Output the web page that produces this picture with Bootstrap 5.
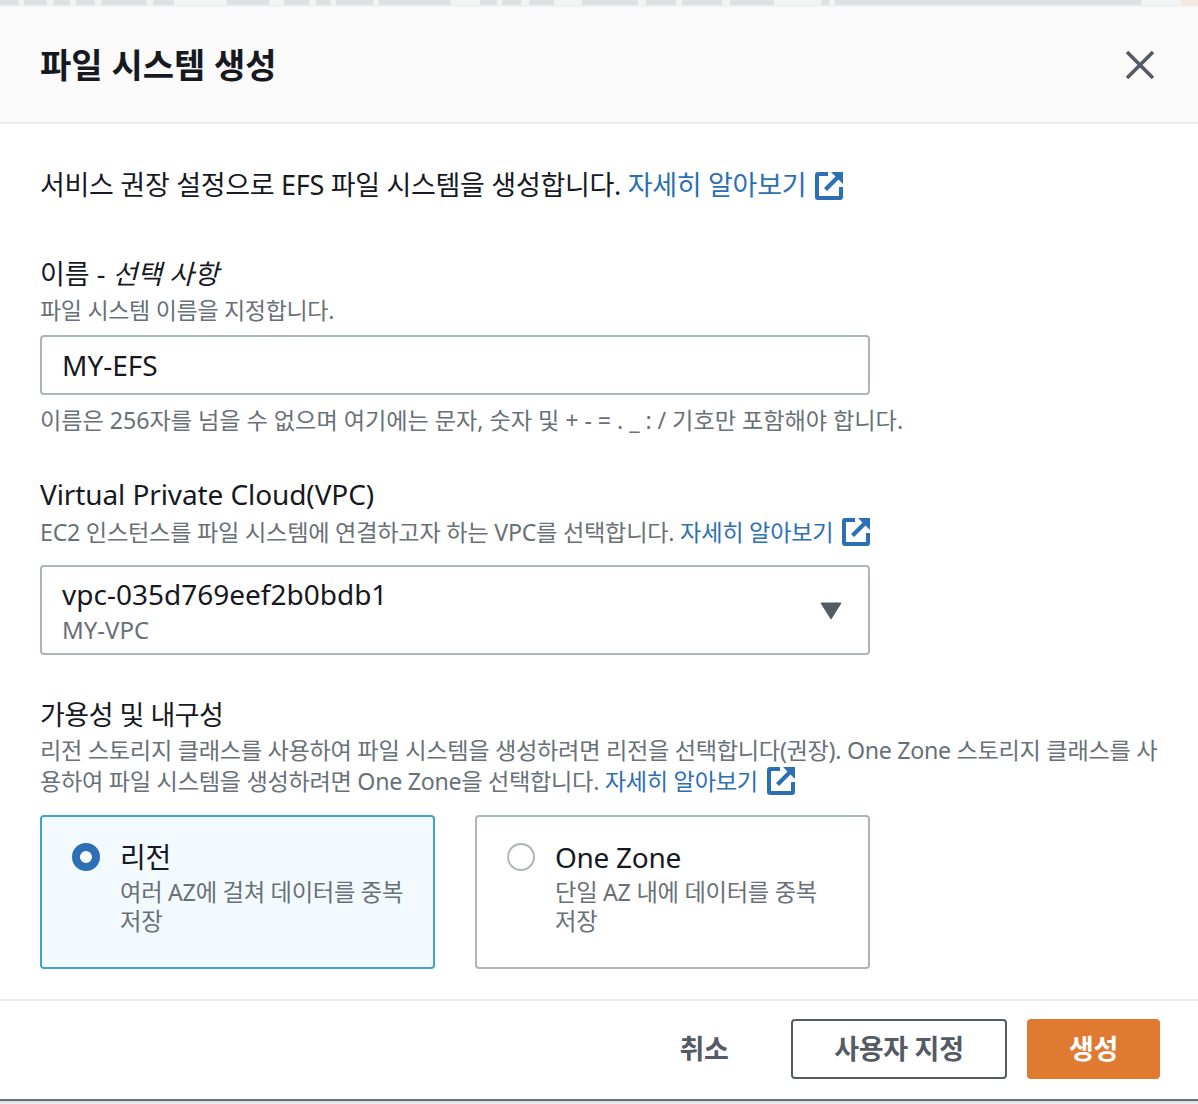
<!DOCTYPE html>
<html lang="ko">
<head>
<meta charset="utf-8">
<title>파일 시스템 생성</title>
<link href="https://cdn.jsdelivr.net/npm/bootstrap@5.3.0/dist/css/bootstrap.min.css" rel="stylesheet">
<style>
html,body{height:1104px;overflow:hidden}
body{font-family:"Noto Sans","Noto Sans CJK KR",sans-serif;background:#e9ebed;color:#16191f;font-size:27px;line-height:36px;letter-spacing:-.3px}
.backdrop{height:7px;border-bottom:2px solid #eef1f1;background:linear-gradient(90deg,#dfe0e2 19px,#f2f3f3 19px 24px,#dfe0e2 24px 47px,#f2f3f3 47px 53px,#dfe0e2 53px 70px,#f2f3f3 70px 76px,#dfe0e2 76px 95px,#f2f3f3 95px 101px,#dfe0e2 101px 147px,#f2f3f3 147px 153px,#dfe0e2 153px 174px,#f2f3f3 174px 227px,#dfe0e2 227px 269px,#f2f3f3 269px 284px,#dfe0e2 284px 309px,#f2f3f3 309px 316px,#dfe0e2 316px 331px,#f2f3f3 331px 336px,#dfe0e2 336px 373px,#f2f3f3 373px 379px,#dfe0e2 379px 451px,#f2f3f3 451px 480px,#dfe0e2 480px 497px,#f2f3f3 497px 502px,#dfe0e2 502px 521px,#f2f3f3 521px 529px,#dfe0e2 529px 554px,#f2f3f3 554px 582px,#dfe0e2 582px 638px,#f2f3f3 638px 646px,#dfe0e2 646px 676px,#f2f3f3 676px 682px,#dfe0e2 682px 722px,#f2f3f3 722px 730px,#dfe0e2 730px 774px,#f2f3f3 774px 821px,#dfe0e2 821px 829px,#f2f3f3 829px 835px,#dfe0e2 835px 1141px,#f2f3f3 1141px 1181px,#f5e9df 1181px)}
.dlg{height:1092px;background:#fff;box-shadow:0 2px 1px #687078;display:flex;flex-direction:column}
.dlg-head{height:117px;background:#fafafa;border-bottom:2px solid #eaeded;padding:0 40px}
.dlg-title{font-size:34px;font-weight:700;margin:0;line-height:1;color:#16191f;letter-spacing:0}
.dlg-body{flex:1;padding:42px 40px 0}
.dlg-foot{height:100px;border-top:2px solid #eaeded;padding:18px 38px 0 0}
.lnk{color:#2c6fb5;text-decoration:none}
.ext{width:28px;height:28px;vertical-align:-5px;margin-left:9px}
.fld-label{font-size:27px;line-height:32px;color:#16191f;letter-spacing:0}
.fld-label em{font-style:italic}
.fld-latin{font-size:28px;letter-spacing:-.1px}
.fld-tight{letter-spacing:-.5px}
.fld-desc{font-size:23.2px;line-height:31px;color:#687078;margin-top:5px}
.fld-name{font-size:23px}
.fld-hint{letter-spacing:-.05px;margin-top:10px}
.fld-vpc{letter-spacing:-.25px}
.inp{width:830px;height:60px;border:2px solid #aab7b8;border-radius:4px;padding:0 20px;font-size:28px;color:#16191f;display:flex;align-items:center;background:#fff;letter-spacing:0}
.sel{height:90px;position:relative;display:block;padding:7px 20px}
.sel-main{font-size:28px;line-height:40px}
.sel-sub{font-size:24px;line-height:32px;color:#687078}
.caret{position:absolute;right:26px;top:35px;width:22px;height:18px}
.opts{width:830px;gap:40px}
.opt{flex:1 1 0;height:154px;border:2px solid #aab7b8;border-radius:4px;padding:22px 28px 22px 30px;gap:20px}
.opt.sel-on{border-color:#44a1ce;background:#f3fafe}
.rad{flex:none;width:28px;height:28px;margin-top:4px}
.opt-title{font-size:28px;line-height:36px;color:#16191f}
.opt-desc{font-size:23.3px;line-height:29px;color:#687078;margin-top:3px}
.xbtn{width:44px;height:44px;padding:8px;border:0;background:transparent;margin-right:-4px}
.xbtn svg{display:block}
.act{height:60px;border-radius:4px;font-size:27px;font-weight:700;font-family:inherit;display:flex;align-items:center;justify-content:center;letter-spacing:-.3px}
.act-plain{width:110px;border:0;background:transparent;color:#545b64;margin-right:32px}
.act-line{width:216px;border:2px solid #545b64;background:#fff;color:#545b64;margin-right:20px}
.act-main{width:133px;border:0;background:#df7a30;color:#fff}
</style>
</head>
<body>
<div class="backdrop"></div>
<div class="dlg">
  <div class="dlg-head d-flex align-items-center justify-content-between">
    <h1 class="dlg-title">파일 시스템 생성</h1>
    <button class="xbtn" type="button" aria-label="닫기">
      <svg viewBox="0 0 28 28" width="28" height="28"><path d="M1 1L27 27M27 1L1 27" stroke="#545b64" stroke-width="3.6" fill="none"/></svg>
    </button>
  </div>
  <div class="dlg-body">
    <p class="m-0" style="line-height:38px">서비스 권장 설정으로 EFS 파일 시스템을 생성합니다. <a class="lnk" href="#">자세히 알아보기<svg class="ext" viewBox="0 0 28 28"><path d="M13 2H3a1 1 0 0 0-1 1V25a1 1 0 0 0 1 1H25a1 1 0 0 0 1-1V15" fill="none" stroke="#2c6fb5" stroke-width="4"/><path d="M16 0H28V12L23.500 7.500L12 19L9 16L20.500 4.500Z" fill="#2c6fb5"/></svg></a></p>

    <div class="fld-label" style="margin-top:54px">이름 - <em>선택 사항</em></div>
    <div class="fld-desc fld-name">파일 시스템 이름을 지정합니다.</div>
    <div class="inp" style="margin-top:9px">MY-EFS</div>
    <div class="fld-desc fld-hint">이름은 256자를 넘을 수 없으며 여기에는 문자, 숫자 및 + - = . _ : / 기호만 포함해야 합니다.</div>

    <div class="fld-label fld-latin" style="margin-top:42px">Virtual Private Cloud(VPC)</div>
    <div class="fld-desc fld-vpc" style="margin-top:7px">EC2 인스턴스를 파일 시스템에 연결하고자 하는 VPC를 선택합니다. <a class="lnk" href="#">자세히 알아보기<svg class="ext" viewBox="0 0 28 28"><path d="M13 2H3a1 1 0 0 0-1 1V25a1 1 0 0 0 1 1H25a1 1 0 0 0 1-1V15" fill="none" stroke="#2c6fb5" stroke-width="4"/><path d="M16 0H28V12L23.500 7.500L12 19L9 16L20.500 4.500Z" fill="#2c6fb5"/></svg></a></div>
    <div class="inp sel" style="margin-top:17px">
      <div class="sel-main">vpc-035d769eef2b0bdb1</div>
      <div class="sel-sub">MY-VPC</div>
      <svg class="caret" viewBox="0 0 22 18"><path d="M1 1H21L11 17Z" fill="#545b64" stroke="#545b64" stroke-linejoin="round"/></svg>
    </div>

    <div class="fld-label fld-tight" style="margin-top:44px">가용성 및 내구성</div>
    <div class="fld-desc" style="margin-top:4px">리전 스토리지 클래스를 사용하여 파일 시스템을 생성하려면 리전을 선택합니다(권장). One Zone 스토리지 클래스를 사용하여 파일 시스템을 생성하려면 One Zone을 선택합니다. <a class="lnk" href="#">자세히 알아보기<svg class="ext" viewBox="0 0 28 28"><path d="M13 2H3a1 1 0 0 0-1 1V25a1 1 0 0 0 1 1H25a1 1 0 0 0 1-1V15" fill="none" stroke="#2c6fb5" stroke-width="4"/><path d="M16 0H28V12L23.500 7.500L12 19L9 16L20.500 4.500Z" fill="#2c6fb5"/></svg></a></div>
    <div class="opts d-flex" style="margin-top:18px">
      <div class="opt sel-on d-flex">
        <svg class="rad" viewBox="0 0 28 28"><circle cx="14" cy="14" r="10" fill="#fff" stroke="#2c6fb5" stroke-width="8"/></svg>
        <div><div class="opt-title">리전</div><div class="opt-desc">여러 AZ에 걸쳐 데이터를 중복 저장</div></div>
      </div>
      <div class="opt d-flex">
        <svg class="rad" viewBox="0 0 28 28"><circle cx="14" cy="14" r="13" fill="#fff" stroke="#aab7b8" stroke-width="2"/></svg>
        <div><div class="opt-title">One Zone</div><div class="opt-desc">단일 AZ 내에 데이터를 중복 저장</div></div>
      </div>
    </div>
  </div>
  <div class="dlg-foot d-flex justify-content-end align-items-start">
    <button class="act act-plain" type="button">취소</button>
    <button class="act act-line" type="button">사용자 지정</button>
    <button class="act act-main" type="button">생성</button>
  </div>
</div>
<script src="https://cdn.jsdelivr.net/npm/bootstrap@5.3.0/dist/js/bootstrap.bundle.min.js"></script>
</body>
</html>
